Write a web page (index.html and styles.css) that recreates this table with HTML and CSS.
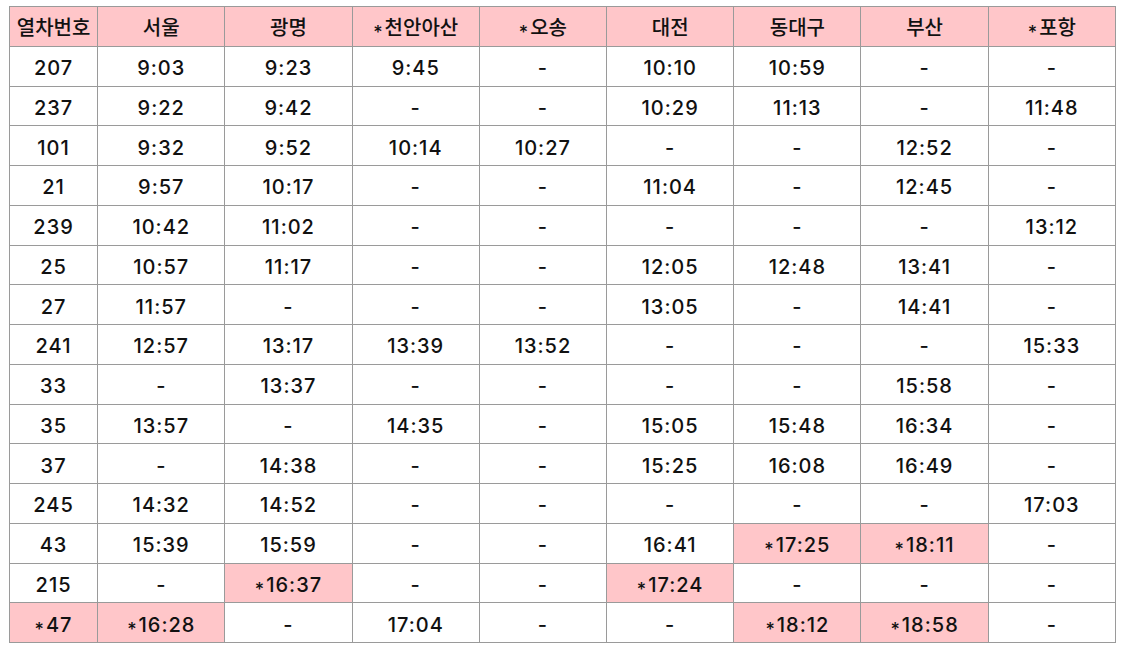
FILE: index.html
```html
<!DOCTYPE html>
<html lang="ko">
<head>
<meta charset="utf-8">
<link rel="stylesheet" href="styles.css">
</head>
<body>
<table class="tt">
<colgroup><col class="c0"><col span="8" class="cx"></colgroup>
<thead>
<tr class="hd"><th>열차번호</th><th>서울</th><th>광명</th><th><span class="ast">*</span>천안아산</th><th><span class="ast">*</span>오송</th><th>대전</th><th>동대구</th><th>부산</th><th><span class="ast">*</span>포항</th></tr>
</thead>
<tbody>
<tr><td>207</td><td>9:03</td><td>9:23</td><td>9:45</td><td>-</td><td>10:10</td><td>10:59</td><td>-</td><td>-</td></tr>
<tr><td>237</td><td>9:22</td><td>9:42</td><td>-</td><td>-</td><td>10:29</td><td>11:13</td><td>-</td><td>11:48</td></tr>
<tr><td>101</td><td>9:32</td><td>9:52</td><td>10:14</td><td>10:27</td><td>-</td><td>-</td><td>12:52</td><td>-</td></tr>
<tr><td>21</td><td>9:57</td><td>10:17</td><td>-</td><td>-</td><td>11:04</td><td>-</td><td>12:45</td><td>-</td></tr>
<tr><td>239</td><td>10:42</td><td>11:02</td><td>-</td><td>-</td><td>-</td><td>-</td><td>-</td><td>13:12</td></tr>
<tr><td>25</td><td>10:57</td><td>11:17</td><td>-</td><td>-</td><td>12:05</td><td>12:48</td><td>13:41</td><td>-</td></tr>
<tr><td>27</td><td>11:57</td><td>-</td><td>-</td><td>-</td><td>13:05</td><td>-</td><td>14:41</td><td>-</td></tr>
<tr><td>241</td><td>12:57</td><td>13:17</td><td>13:39</td><td>13:52</td><td>-</td><td>-</td><td>-</td><td>15:33</td></tr>
<tr><td>33</td><td>-</td><td>13:37</td><td>-</td><td>-</td><td>-</td><td>-</td><td>15:58</td><td>-</td></tr>
<tr><td>35</td><td>13:57</td><td>-</td><td>14:35</td><td>-</td><td>15:05</td><td>15:48</td><td>16:34</td><td>-</td></tr>
<tr><td>37</td><td>-</td><td>14:38</td><td>-</td><td>-</td><td>15:25</td><td>16:08</td><td>16:49</td><td>-</td></tr>
<tr><td>245</td><td>14:32</td><td>14:52</td><td>-</td><td>-</td><td>-</td><td>-</td><td>-</td><td>17:03</td></tr>
<tr><td>43</td><td>15:39</td><td>15:59</td><td>-</td><td>-</td><td>16:41</td><td class="hl"><span class="ast">*</span>17:25</td><td class="hl"><span class="ast">*</span>18:11</td><td>-</td></tr>
<tr><td>215</td><td>-</td><td class="hl"><span class="ast">*</span>16:37</td><td>-</td><td>-</td><td class="hl"><span class="ast">*</span>17:24</td><td>-</td><td>-</td><td>-</td></tr>
<tr><td class="hl"><span class="ast">*</span>47</td><td class="hl"><span class="ast">*</span>16:28</td><td>-</td><td>17:04</td><td>-</td><td>-</td><td class="hl"><span class="ast">*</span>18:12</td><td class="hl"><span class="ast">*</span>18:58</td><td>-</td></tr>
</tbody>
</table>
</body>
</html>
```

FILE: styles.css
```css
html, body {
  background: #ffffff;
}
body {
  margin: 6px 0 0 9px;
  font-family: Inter, "Noto Sans CJK KR", sans-serif;
  color: #111111;
}
.tt {
  border-collapse: collapse;
  table-layout: fixed;
  width: 1107px;
}
.c0 { width: 88px; }
.cx { width: 127px; }
.tt th, .tt td {
  border: 1.5px solid #9a9a9a;
  height: 34.75px;
  padding: 4px 0 0 0;
  text-align: center;
  vertical-align: middle;
  font-size: 20px;
  font-weight: 500;
  line-height: 22px;
}
.tt td {
  letter-spacing: 1px;
}
.hd th {
  background: #ffc6c9;
  font-weight: 500;
  letter-spacing: 0;
}
.tt td.hl {
  background: #ffc6c9;
}
.ast {
  font-size: 18px;
  line-height: 0;
  vertical-align: -4px;
  margin-right: 2px;
  letter-spacing: 0;
}
```
